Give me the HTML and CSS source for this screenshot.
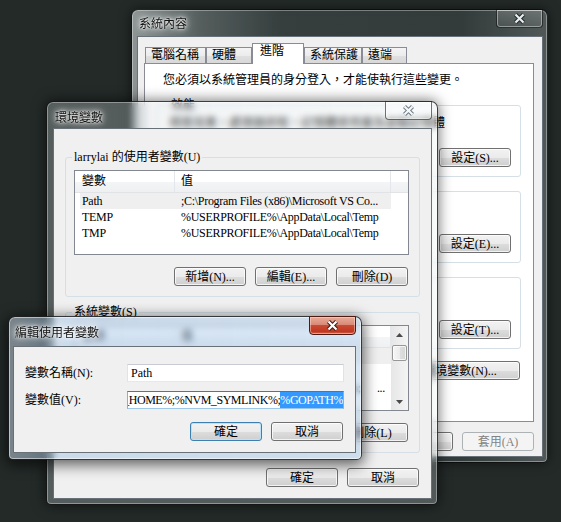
FILE: index.html
```html
<!DOCTYPE html>
<html lang="zh-Hant">
<head>
  <meta charset="UTF-8">
  <meta name="viewport" content="width=device-width, initial-scale=1.0">
  <title>系統內容 - 環境變數</title>
  <link rel="stylesheet" href="styles.css">
</head>
<body>
  <div class="desktop">

    <!-- 系統內容 (back window) -->
    <div class="win win-sys">
      <div class="titlebar">
        <span class="title">系統內容</span>
        <span class="close close-dark">
          <svg width="13" height="11" viewBox="0 0 13 11"><path d="M2.5 1.5 L10.5 9.5 M10.5 1.5 L2.5 9.5" stroke="#1f2829" stroke-width="4.2"/><path d="M2.5 1.5 L10.5 9.5 M10.5 1.5 L2.5 9.5" stroke="#e9eef0" stroke-width="2.2"/></svg>
        </span>
      </div>
      <div class="client sys-client">
        <div class="tabs">
          <span class="tab tab-name">電腦名稱</span>
          <span class="tab tab-hw">硬體</span>
          <span class="tab tab-adv active">進階</span>
          <span class="tab tab-prot">系統保護</span>
          <span class="tab tab-remote">遠端</span>
        </div>
        <div class="panel">
          <p class="note">您必須以系統管理員的身分登入，才能使執行這些變更。</p>
          <fieldset class="group sys-group">
            <legend>效能</legend>
            <p>視覺效果，處理器排程，記憶體使用量及虛擬記憶體</p>
            <div class="row-end"><button class="btn">設定(S)...</button></div>
          </fieldset>
          <fieldset class="group sys-group">
            <legend>使用者設定檔</legend>
            <p>與您登入相關的桌面設定</p>
            <div class="row-end"><button class="btn">設定(E)...</button></div>
          </fieldset>
          <fieldset class="group sys-group">
            <legend>啟動及修復</legend>
            <p>系統啟動、系統失敗及偵錯資訊</p>
            <div class="row-end"><button class="btn">設定(T)...</button></div>
          </fieldset>
          <div class="row-end env-row"><button class="btn btn-wide">環境變數(N)...</button></div>
        </div>
        <div class="actions sys-actions">
          <button class="btn">確定</button>
          <button class="btn">取消</button>
          <button class="btn" disabled>套用(A)</button>
        </div>
      </div>
    </div>

    <!-- 環境變數 -->
    <div class="win win-env">
      <div class="titlebar">
        <span class="title">環境變數</span>
        <span class="close close-light">
          <svg width="13" height="11" viewBox="0 0 13 11"><path d="M2.5 1.5 L10.5 9.5 M10.5 1.5 L2.5 9.5" stroke="#6f7b83" stroke-width="4.2"/><path d="M2.5 1.5 L10.5 9.5 M10.5 1.5 L2.5 9.5" stroke="#f6f8f9" stroke-width="2.2"/></svg>
        </span>
      </div>
      <div class="client env-client">
        <fieldset class="group env-group">
          <legend>larrylai 的使用者變數(U)</legend>
          <div class="list user-list">
            <div class="list-body">
              <div class="list-head">
                <span class="head-name">變數</span>
                <span class="head-value">值</span>
                <span class="head-fill"></span>
              </div>
              <div class="list-row hot"><span class="cell-name">Path</span><span class="cell-value">;C:\Program Files (x86)\Microsoft VS Co...</span></div>
              <div class="list-row"><span class="cell-name">TEMP</span><span class="cell-value">%USERPROFILE%\AppData\Local\Temp</span></div>
              <div class="list-row"><span class="cell-name">TMP</span><span class="cell-value">%USERPROFILE%\AppData\Local\Temp</span></div>
            </div>
          </div>
          <div class="actions">
            <button class="btn">新增(N)...</button>
            <button class="btn">編輯(E)...</button>
            <button class="btn">刪除(D)</button>
          </div>
        </fieldset>

        <fieldset class="group env-group">
          <legend>系統變數(S)</legend>
          <div class="list sys-list">
            <div class="list-body">
              <div class="list-head">
                <span class="head-name">變數</span>
                <span class="head-value">值</span>
              </div>
              <div class="list-row hot"><span class="cell-name">ComSpec</span><span class="cell-value">C:\Windows\system32\cmd.exe</span></div>
              <div class="list-row"><span class="cell-name">FP_NO_HOST_CHECK</span><span class="cell-value">NO</span></div>
              <div class="list-row"><span class="cell-name">Path</span><span class="cell-value tail"><span>C:\ProgramData\Oracle\Java\javapath;C:\Go\bin;</span><span class="dots">...</span></span></div>
              <div class="list-row"><span class="cell-name">PATHEXT</span><span class="cell-value">.COM;.EXE;.BAT</span></div>
            </div>
            <div class="scrollbar">
              <span class="sb-btn"><svg width="7" height="4" viewBox="0 0 7 4"><path d="M0 4 L3.5 0 L7 4Z" fill="#4a4a4a"/></svg></span>
              <span class="sb-track"><span class="sb-thumb"></span></span>
              <span class="sb-btn"><svg width="7" height="4" viewBox="0 0 7 4"><path d="M0 0 L3.5 4 L7 0Z" fill="#4a4a4a"/></svg></span>
            </div>
          </div>
          <div class="actions">
            <button class="btn">新增(W)...</button>
            <button class="btn">編輯(I)...</button>
            <button class="btn">刪除(L)</button>
          </div>
        </fieldset>

        <div class="actions env-actions">
          <button class="btn">確定</button>
          <button class="btn">取消</button>
        </div>
      </div>
    </div>

    <!-- 編輯使用者變數 (active) -->
    <div class="win win-edit">
      <div class="titlebar">
        <span class="title">編輯使用者變數</span>
        <span class="close close-red">
          <svg width="13" height="11" viewBox="0 0 13 11"><path d="M2.5 1.5 L10.5 9.5 M10.5 1.5 L2.5 9.5" stroke="#3b1a12" stroke-width="4.2"/><path d="M2.5 1.5 L10.5 9.5 M10.5 1.5 L2.5 9.5" stroke="#ffffff" stroke-width="2.2"/></svg>
        </span>
      </div>
      <div class="client edit-client">
        <div class="form">
          <label>變數名稱(N):</label>
          <div class="input">Path</div>
          <label>變數值(V):</label>
          <div class="input focus"><span>C:\Go\bin;%NVM_HOME%;%NVM_SYMLINK%;</span><span class="sel">%GOPATH%</span></div>
        </div>
        <div class="actions edit-actions">
          <button class="btn btn-default">確定</button>
          <button class="btn">取消</button>
        </div>
      </div>
    </div>

  </div>
</body>
</html>
```

FILE: styles.css
```css
/* Basic Styles */
* {
  box-sizing: border-box;
}

body {
  margin: 0;
  background: #232a28;
  font-family: "Liberation Serif", "Noto Sans CJK TC", serif;
  font-size: 12px;
  line-height: 14px;
  color: #000;
}

p {
  margin: 0;
}

.desktop {
  position: relative;
  width: 561px;
  height: 522px;
  overflow: hidden;
  background: #232a28;
}

/* Aero windows */
.win {
  position: absolute;
  display: flex;
  flex-direction: column;
  border: 1px solid rgba(0, 0, 0, 0.75);
  border-radius: 7px 7px 5px 5px;
  box-shadow: inset 0 0 0 1px rgba(255, 255, 255, 0.35), 0 0 12px rgba(0, 0, 0, 0.5);
  backdrop-filter: blur(3px);
}

.win-sys {
  left: 131px;
  top: 9px;
  width: 417px;
  height: 454px;
  padding: 0 4px 5px 5px;
  background: linear-gradient(to right, rgba(215, 222, 224, 0.6) 0, rgba(160, 172, 174, 0.4) 70px, rgba(110, 125, 126, 0.25) 150px, rgba(100, 115, 116, 0.25) 330px, rgba(150, 160, 162, 0.4) 100%);
}

.win-env {
  left: 46px;
  top: 101px;
  width: 392px;
  height: 404px;
  padding: 0 5px 5px 6px;
  background: linear-gradient(to right, rgba(205, 214, 218, 0.3) 0, rgba(225, 232, 235, 0.25) 100%);
  box-shadow: inset 0 0 0 1px rgba(255, 255, 255, 0.35), 0 0 14px rgba(0, 0, 0, 0.6);
}

.win-edit {
  left: 8px;
  top: 316px;
  width: 354px;
  height: 144px;
  padding: 0 5px 6px 4px;
  background: linear-gradient(to right, rgba(195, 208, 220, 0.55) 0, rgba(160, 195, 230, 0.45) 60px, rgba(165, 198, 230, 0.42) 100%);
  box-shadow: inset 0 0 0 1px rgba(255, 255, 255, 0.5), 0 3px 14px 2px rgba(0, 0, 0, 0.6);
}

.titlebar {
  display: flex;
  align-items: center;
  height: 26px;
  flex-shrink: 0;
}

.win-env .titlebar {
  padding-top: 3px;
}

.win-edit .titlebar {
  height: 29px;
}

.title {
  padding-left: 2px;
  font-family: "Noto Sans CJK TC", sans-serif;
  font-size: 12px;
  color: #111;
  text-shadow: 0 0 8px rgba(255, 255, 255, 0.95), 0 0 5px rgba(255, 255, 255, 0.9), 0 0 2px #fff;
}

.close {
  align-self: flex-start;
  margin: -1px 0 0 auto;
  width: 47px;
  height: 19px;
  display: flex;
  align-items: center;
  justify-content: center;
  border: 1px solid rgba(0, 0, 0, 0.55);
  border-radius: 0 0 4px 4px;
  box-shadow: inset 0 0 0 1px rgba(255, 255, 255, 0.4);
}

.win-env .titlebar .close {
  margin-top: -4px;
}

.close-dark {
  background: linear-gradient(rgba(255, 255, 255, 0.18), rgba(255, 255, 255, 0.05));
}

.close-light {
  background: linear-gradient(rgba(255, 255, 255, 0.45), rgba(255, 255, 255, 0.2));
}

.close-red {
  height: 19px;
  border-color: #4e1a10;
  background: linear-gradient(#e9ab9a 0, #d98a76 45%, #c84a33 50%, #c13821 85%, #d06a52 100%);
  box-shadow: inset 0 0 0 1px rgba(255, 220, 210, 0.5);
}

.client {
  flex: 1;
  display: flex;
  flex-direction: column;
  background: #f0f0f0;
  border: 1px solid rgba(30, 45, 55, 0.65);
}

/* Buttons */
.btn {
  width: 72px;
  height: 19px;
  padding: 0;
  font: inherit;
  line-height: 14px;
  color: #000;
  border: 1px solid #707070;
  border-radius: 3px;
  background: linear-gradient(#f2f2f2 0%, #ebebeb 50%, #dddddd 51%, #cfcfcf 100%);
  box-shadow: inset 0 0 0 1px rgba(255, 255, 255, 0.75);
}

.btn:disabled {
  color: #838383;
  border-color: #adb2b5;
  background: #f4f4f4;
  box-shadow: none;
}

.btn-wide {
  width: 120px;
}

.btn-default {
  border-color: #3c7fb1;
  box-shadow: inset 0 0 0 1px #b9e4f8;
}

.actions {
  display: flex;
  justify-content: flex-end;
  gap: 9px;
}

.row-end {
  display: flex;
  justify-content: flex-end;
}

/* Group boxes */
.group {
  margin: 0;
  min-width: 0;
  border: 1px solid #d5dfe5;
  border-radius: 3px;
}

.group legend {
  padding: 0 2px;
}

/* 系統內容 */
.sys-client {
  padding: 6px 8px 0 6px;
}

.tabs {
  display: flex;
  align-items: flex-end;
  height: 20px;
  margin-left: 1px;
}

.tab {
  height: 16px;
  padding-left: 5px;
  line-height: 15px;
  border: 1px solid #898c95;
  border-bottom: none;
  background: linear-gradient(#f4f4f4 0, #ececec 50%, #e0e0e0 51%, #d8d8d8 100%);
}

.tab-name { width: 61px; }
.tab-hw { width: 46px; }
.tab-prot { width: 58px; }
.tab-remote { width: 45px; }

.tab.active {
  position: relative;
  z-index: 1;
  width: 52px;
  height: 21px;
  margin-bottom: -1px;
  padding-left: 7px;
  line-height: 14px;
  background: #fff;
}

.panel {
  height: 359px;
  padding: 9px 12px 0 11px;
  background: #fff;
  border: 1px solid #898c95;
}

.note {
  margin-left: 7px;
}

.sys-group {
  margin-top: 7px;
  padding: 4px 9px 9px 12px;
}

.note + .sys-group {
  margin-top: 11px;
}

.sys-group .row-end {
  margin-top: 18px;
}

.env-row {
  margin-top: 12px;
  padding-right: 1px;
}

.sys-actions {
  margin-top: 10px;
}

/* 環境變數 */
.env-client {
  padding: 21px 11px 0 11px;
}

.env-group {
  padding: 6px 11px 10px 6px;
}

.env-group + .env-group {
  margin-top: 8px;
}

.env-group .actions {
  margin-top: 12px;
}

.env-actions {
  margin-top: 15px;
  padding-right: 1px;
}

.list {
  display: flex;
  width: 335px;
  margin-left: 2px;
  background: #fff;
  border: 1px solid #828790;
  overflow: hidden;
}

.user-list {
  height: 85px;
}

.sys-list {
  height: 86px;
}

.list-body {
  flex: 1;
  min-width: 0;
}

.list-head {
  display: flex;
  height: 22px;
  line-height: 21px;
  background: linear-gradient(#ffffff 0, #ffffff 50%, #f4f5f7 51%, #eef0f2 100%);
  border-bottom: 1px solid #e1e3e7;
}

.head-name,
.head-value {
  border-right: 1px solid #e3e6ea;
}

.head-name {
  width: 100px;
  padding-left: 7px;
}

.head-value {
  width: 216px;
  padding-left: 6px;
}

.head-fill {
  flex: 1;
}

.list-row {
  display: flex;
  width: 311px;
  height: 16px;
  margin-left: 5px;
  line-height: 16px;
  white-space: nowrap;
  letter-spacing: -0.3px;
}

.list-row.hot {
  background: #efefef;
}

.cell-name {
  width: 95px;
  padding-left: 2px;
  overflow: hidden;
}

.cell-value {
  flex: 1;
  min-width: 0;
  padding-left: 6px;
  overflow: hidden;
}

.cell-value.tail {
  display: flex;
  justify-content: flex-end;
  padding-right: 6px;
}

.cell-value.tail span {
  flex-shrink: 0;
}

.cell-value .dots {
  margin-left: 16px;
}

/* Scrollbar */
.scrollbar {
  display: flex;
  flex-direction: column;
  width: 17px;
  background: linear-gradient(to right, #e6e6e6, #f4f4f4);
}

.sb-btn {
  display: flex;
  align-items: center;
  justify-content: center;
  height: 17px;
}

.sb-track {
  flex: 1;
}

.sb-thumb {
  display: block;
  width: 15px;
  height: 16px;
  margin: 2px 1px 0;
  border: 1px solid #979797;
  border-radius: 2px;
  background: linear-gradient(to right, #f6f6f6 0, #ececec 50%, #dedede 51%, #d6d6d6 100%);
  box-shadow: inset 0 0 0 1px rgba(255, 255, 255, 0.7);
}

/* 編輯使用者變數 */
.edit-client {
  padding: 17px 12px 0 11px;
}

.form {
  display: grid;
  grid-template-columns: 102px 217px;
  grid-auto-rows: 18px;
  row-gap: 9px;
  align-items: center;
}

.input {
  height: 18px;
  padding: 0 3px;
  display: flex;
  align-items: center;
  overflow: hidden;
  white-space: nowrap;
  background: #fff;
  border: 1px solid;
  border-color: #c9ccd3 #dfe3e9 #e3e9ef #e2e3ea;
}

.input.focus {
  justify-content: flex-end;
  padding-right: 0;
  letter-spacing: -0.45px;
  border-color: #3d7bad #7fb2dd #9cc7e8 #7fb2dd;
}

.input.focus span {
  flex-shrink: 0;
}

.sel {
  line-height: 16px;
  background: #3399ff;
  color: #fff;
}

.edit-actions {
  margin-top: 13px;
}
```
